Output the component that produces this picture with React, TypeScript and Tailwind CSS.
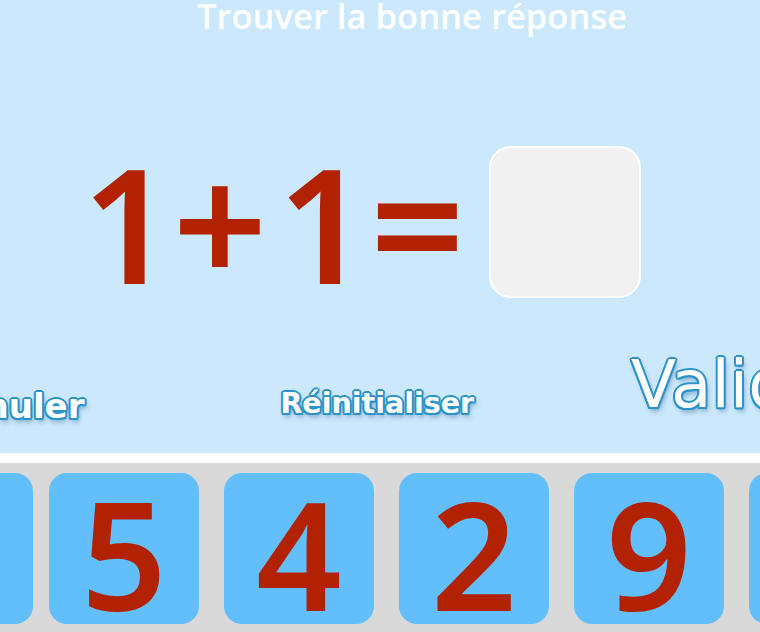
import * as React from "react";

const outline =
  "[text-shadow:2px_0_#2b93cb,-2px_0_#2b93cb,0_2px_#2b93cb,0_-2px_#2b93cb,1.5px_1.5px_#2b93cb,-1.5px_-1.5px_#2b93cb,1.5px_-1.5px_#2b93cb,-1.5px_1.5px_#2b93cb,2px_4px_5px_rgba(20,80,120,0.45)]";

const tiles = ["3", "5", "4", "2", "9", "7"];

export default function App() {
  const [answer, setAnswer] = React.useState<string>("");

  return (
    <div className="w-[760px] h-[632px] overflow-hidden flex flex-col bg-[#cbe8fc]">
      <div className="h-[453px] flex flex-col">
        <h1 className="pl-[197px] text-[34.6px] leading-[32px] font-semibold text-white font-['Open_Sans',sans-serif] whitespace-nowrap">
          Trouver la bonne réponse
        </h1>

        {/* equation + answer slot */}
        <div className="mt-[114px] h-[152px] pl-[82px] flex items-center text-[160px] leading-none font-semibold text-[#b32200] font-['Noto_Sans',sans-serif]">
          <span>1</span>
          <span className="ml-[-1px] text-[166px]">+</span>
          <span className="ml-[10px]">1</span>
          <span className="ml-[1px] text-[166px]">=</span>
          <div className="ml-[24px] w-[152px] h-[152px] rounded-[22px] bg-[#f1f1f1] border-2 border-white flex items-center justify-center text-[110px]">
            {answer}
          </div>
        </div>

        {/* action buttons */}
        <div className="h-[120px] flex items-end whitespace-nowrap font-['DejaVu_Sans',sans-serif] text-white">
          <button
            type="button"
            onClick={() => setAnswer((a) => a.slice(0, -1))}
            className={`ml-[-66px] mb-[-5px] text-[34px] leading-none font-bold ${outline}`}
          >
            Annuler
          </button>
          <button
            type="button"
            onClick={() => setAnswer("")}
            className={`ml-[196px] text-[28.5px] leading-none font-bold ${outline}`}
          >
            Réinitialiser
          </button>
          <button type="button" className={`ml-[157px] text-[66px] leading-none ${outline}`}>
            Valider
          </button>
        </div>
      </div>

      <div className="h-[10px] bg-white" />

      {/* number pad */}
      <div className="flex-1 bg-[#d9d9d9] pt-[10px] flex">
        {tiles.map((d, i) => (
          <button
            key={i}
            type="button"
            onClick={() => setAnswer((a) => (a + d).slice(-2))}
            className={`shrink-0 w-[150px] h-[151px] rounded-[18px] bg-[#63bffc] flex items-center justify-center pt-[9px] text-[150px] leading-none font-semibold text-[#b32200] font-['Noto_Sans',sans-serif] ${
              i === 0 ? "ml-[-117px]" : i === 1 ? "ml-[16px]" : "ml-[25px]"
            }`}
          >
            {d}
          </button>
        ))}
      </div>
    </div>
  );
}
